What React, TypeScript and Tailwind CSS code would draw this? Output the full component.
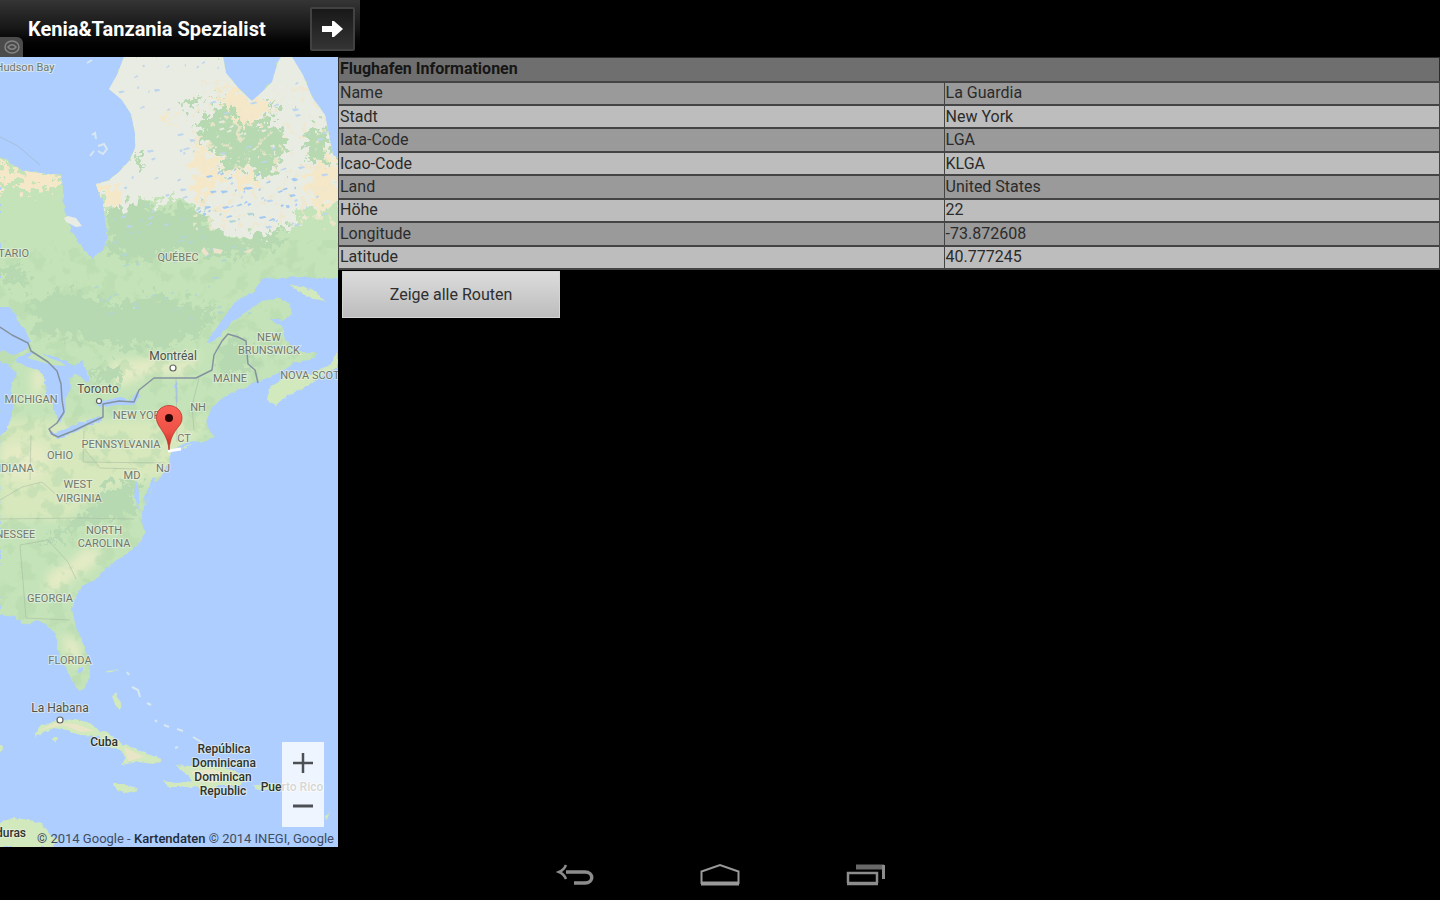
import React from 'react';

interface InfoRow {
  label: string;
  value: string;
}

interface MapLabel {
  text: string;
  x: number;
  y: number;
  kind: 'state' | 'city' | 'country';
}

const infoRows: InfoRow[] = [
  { label: 'Name', value: 'La Guardia' },
  { label: 'Stadt', value: 'New York' },
  { label: 'Iata-Code', value: 'LGA' },
  { label: 'Icao-Code', value: 'KLGA' },
  { label: 'Land', value: 'United States' },
  { label: 'Höhe', value: '22' },
  { label: 'Longitude', value: '-73.872608' },
  { label: 'Latitude', value: '40.777245' },
];

const mapLabels: MapLabel[] = [
  { text: 'Hudson Bay', x: 25, y: 71, kind: 'state' },
  { text: 'ONTARIO', x: 6, y: 257, kind: 'state' },
  { text: 'QUÉBEC', x: 178, y: 261, kind: 'state' },
  { text: 'NEW', x: 269, y: 341, kind: 'state' },
  { text: 'BRUNSWICK', x: 269, y: 354, kind: 'state' },
  { text: 'MAINE', x: 230, y: 382, kind: 'state' },
  { text: 'NOVA SCOTIA', x: 315, y: 379, kind: 'state' },
  { text: 'NH', x: 198, y: 411, kind: 'state' },
  { text: 'CT', x: 184, y: 442, kind: 'state' },
  { text: 'NEW YORK', x: 140, y: 419, kind: 'state' },
  { text: 'MICHIGAN', x: 31, y: 403, kind: 'state' },
  { text: 'PENNSYLVANIA', x: 121, y: 448, kind: 'state' },
  { text: 'OHIO', x: 60, y: 459, kind: 'state' },
  { text: 'INDIANA', x: 12, y: 472, kind: 'state' },
  { text: 'NJ', x: 163, y: 472, kind: 'state' },
  { text: 'MD', x: 132, y: 479, kind: 'state' },
  { text: 'WEST', x: 78, y: 488, kind: 'state' },
  { text: 'VIRGINIA', x: 79, y: 502, kind: 'state' },
  { text: 'TENNESSEE', x: 5, y: 538, kind: 'state' },
  { text: 'NORTH', x: 104, y: 534, kind: 'state' },
  { text: 'CAROLINA', x: 104, y: 547, kind: 'state' },
  { text: 'GEORGIA', x: 50, y: 602, kind: 'state' },
  { text: 'FLORIDA', x: 70, y: 664, kind: 'state' },
  { text: 'Montréal', x: 173, y: 360, kind: 'city' },
  { text: 'Toronto', x: 98, y: 393, kind: 'city' },
  { text: 'La Habana', x: 60, y: 712, kind: 'city' },
  { text: 'Cuba', x: 104, y: 746, kind: 'country' },
  { text: 'República', x: 224, y: 753, kind: 'country' },
  { text: 'Dominicana', x: 224, y: 767, kind: 'country' },
  { text: 'Dominican', x: 223, y: 781, kind: 'country' },
  { text: 'Republic', x: 223, y: 795, kind: 'country' },
  { text: 'Puerto Rico', x: 292, y: 791, kind: 'country' },
  { text: 'Honduras', x: 0, y: 837, kind: 'country' },
];

const labelStyles = {
  state: 'fill-[#70786e] text-[11px]',
  city: 'fill-[#4d524b] text-[12px]',
  country: 'fill-[#2f332e] text-[12px] font-medium',
};

const mainland =
  'M0 157 L8 160 15 166 24 171 40 173 61 175 63 190 64 207 70 228 77 239 83 250 92 258 102 251 108 239 105 218 103 204 99 193 96 184 107 181 118 173 130 160 135 148 135 133 131 114 122 100 109 89 117 75 124 57 H223 L226 73 240 90 252 101 262 92 272 82 278 62 281 57 H292 L303 75 312 97 325 115 329 135 333 155 338 158 V279 L300 277 262 279 253 292 235 302 222 320 206 343 214 342 232 322 243 314 262 301 280 298 290 304 292 314 284 320 268 318 282 326 285 340 300 352 317 352 314 359 296 362 284 370 270 377 258 381 240 389 222 398 211 409 206 422 210 432 214 436 205 442 190 441 172 449 168 463 160 478 155 483 149 498 143 508 141 520 145 533 136 547 120 558 104 570 95 580 82 586 75 598 72 610 76 627 83 643 85 650 90 662 90 676 84 689 79 691 72 680 65 667 57 650 56 634 47 625 38 620 26 625 15 617 0 615Z';

const islands = [
  'M338 350 331 364 310 374 288 373 269 389 267 400 276 405 287 396 307 386 324 374 338 367Z',
  'M290 285 301 286 316 292 325 301 314 299 300 293Z',
  'M34 737 39 727 55 721 75 719 90 723 98 730 112 735 122 744 136 749 148 754 163 760 153 764 139 762 121 765 126 757 120 750 109 746 98 736 80 735 67 730 53 728 40 735Z',
  'M176 765 190 766 205 764 225 768 240 773 249 779 240 785 219 785 207 792 195 787 170 787 162 781 178 783 192 781 187 774 180 770Z',
  'M113 784 127 784 138 790 126 793 117 790Z',
  'M254 785 280 784 284 789 256 790Z',
  'M0 822 14 818 30 820 42 823 50 835 58 840 52 847 H0Z',
  'M112 696 116 693 121 704 120 710 115 704Z',
  'M106 671 119 670 112 673Z',
  'M52 738 58 738 56 743Z',
  'M0 744 4 747 0 754Z',
  'M324 817 330 811 327 820Z',
  'M168 448 181 447 195 443 179 450Z',
];

const lakes = [
  'M0 307 9 307 15 313 18 321 25 329 30 341 26 350 13 355 0 350Z',
  'M0 362 8 364 17 373 11 385 12 397 12 415 7 430 0 436Z',
  'M15 360 31 352 49 355 64 360 74 366 82 361 88 373 90 382 83 380 76 373 69 379 71 388 65 400 66 412 60 422 56 416 53 406 46 398 45 380 38 370 27 367Z',
  'M49 430 53 433 66 429 80 423 98 416 103 420 86 427 70 434 59 438 51 436Z',
  'M98 404 106 400 120 398 131 400 136 393 140 396 134 405 118 405 106 407 99 406Z',
  'M175 382 178 381 178 403 176 402Z',
  'M136 480 139 493 139 505 141 514 137 505 134 493Z',
  'M153 477 156 482 151 491 145 505 144 497Z',
  'M79 667 83 667 82 673 79 672Z',
];

const forests = [
  'M198 125 210 112 222 108 218 90 228 100 245 121 270 121 285 132 282 153 278 172 262 176 242 165 230 175 214 150 200 142Z',
  'M184 104 199 97 197 107 187 109Z',
  'M306 143 318 120 328 135 331 158 318 166 306 160Z',
  'M268 99 278 107 277 115 268 108Z',
  'M132 165 139 152 142 160 135 166Z',
  'M109 211 136 203 170 210 195 205 212 230 245 240 290 225 270 252 225 258 180 252 140 263 107 252Z',
  'M30 302 72 292 115 305 160 294 200 308 222 304 204 330 164 349 116 345 72 338 36 334Z',
  'M220 353 233 336 248 338 257 362 245 374 220 373Z',
  'M35 548 66 525 95 505 105 488 137 480 137 510 120 519 84 526 60 540Z',
  'M0 263 30 272 26 286 0 282Z',
  'M88 369 118 365 122 380 96 384Z',
];

const lowlands = [
  'M0 445 36 443 50 450 42 478 25 482 0 476Z',
  'M50 571 72 561 83 548 105 550 92 568 73 578 60 592 43 590Z',
  'M61 635 77 640 82 652 76 668 66 652Z',
  'M31 368 46 372 45 388 33 398Z',
  'M108 362 145 359 182 362 202 350 188 376 150 374 118 388Z',
];

const sandAreas = [
  'M0 159 22 170 60 176 60 190 40 187 28 194 15 182 0 187Z',
  'M98 185 119 185 120 199 112 212 106 205Z',
  'M220 89 234 86 249 101 262 103 266 96 264 116 248 123 236 120 232 107 220 104Z',
  'M193 144 201 144 207 156 219 160 225 178 212 188 204 206 196 194Z',
  'M307 172 330 158 338 162 338 201 322 211 307 196Z',
  'M162 118 181 113 178 118 165 121Z',
  'M218 203 229 212 221 216Z',
  'M232 172 251 171 260 181 245 191 235 185Z',
];

const borders = [
  'M0 327 12 335 28 343 31 351 48 362 57 371 61 384 62 400 64 412 57 423 49 429 52 434 58 437 73 431 90 423 103 417 103 404 119 401 134 402 139 390 154 378 H196 L212 370 214 355 222 341 228 334 238 337 246 341 248 364 255 370 258 383',
];

const stateLines = [
  'M31 435 30 480',
  'M84 431 83 462 165 463',
  'M83 447 100 468 137 469',
  'M0 500 22 487 42 482 67 504',
  'M0 519 78 518 134 519',
  'M20 545 26 618 70 620',
  'M20 545 48 540 68 562 76 579',
  'M176 378 177 442',
  'M199 378 192 406 194 430',
  'M0 137 18 146 40 165',
];

// Small seeded generator so the lakes land in the same place on every render
function scatter(seed: number, count: number, box: number[]) {
  let n = seed;
  const next = () => {
    n = (n * 16807) % 2147483647;
    return n / 2147483647;
  };
  return Array.from({ length: count }, () => {
    const x = box[0] + next() * box[2];
    const y = box[1] + next() * box[3];
    const w = 1 + next() * 5;
    return `M${x.toFixed(1)} ${y.toFixed(1)} l${w.toFixed(1)} ${(-next() * 3).toFixed(1)} l${(w / 3).toFixed(1)} 1.5 l${(-w).toFixed(1)} 1.5z`;
  }).join(' ');
}

const northLakes = scatter(41, 80, [112, 60, 215, 170]);
const centralLakes = scatter(97, 40, [198, 170, 100, 55]);
const southLakes = scatter(733, 65, [90, 205, 160, 115]);
const greySpots = scatter(255, 55, [198, 120, 100, 105]);

function AirportMap() {
  return (
    <svg
      className="absolute inset-0 h-full w-full"
      viewBox="0 57 338 790"
      preserveAspectRatio="xMinYMin slice"
      role="img"
      aria-label="La Guardia"
    >
      <defs>
        <clipPath id="land">
          <path d={mainland} />
        </clipPath>
        <filter id="ragged" x="-10%" y="-10%" width="120%" height="120%">
          <feTurbulence type="fractalNoise" baseFrequency="0.13" numOctaves="3" seed="8" />
          <feDisplacementMap in="SourceGraphic" scale="36" xChannelSelector="R" yChannelSelector="G" />
        </filter>
        {/* Keeps the fill only where the noise is high, for woodland and sand patches */}
        <filter id="mottle" x="0" y="0" width="100%" height="100%">
          <feTurbulence type="fractalNoise" baseFrequency="0.06" numOctaves="4" seed="21" />
          <feColorMatrix values="0 0 0 0 0  0 0 0 0 0  0 0 0 0 0  9 0 0 0 -4.8" result="mask" />
          <feComposite in="SourceGraphic" in2="mask" operator="in" />
        </filter>
        <filter id="speckle" x="0" y="0" width="100%" height="100%">
          <feTurbulence type="fractalNoise" baseFrequency="0.14" numOctaves="3" seed="5" />
          <feColorMatrix values="0 0 0 0 0  0 0 0 0 0  0 0 0 0 0  0 10 0 0 -6.1" result="mask" />
          <feComposite in="SourceGraphic" in2="mask" operator="in" />
        </filter>
        <filter id="soft" x="-10%" y="-10%" width="120%" height="120%">
          <feGaussianBlur stdDeviation="5" />
        </filter>
        <filter id="coast">
          <feTurbulence type="fractalNoise" baseFrequency="0.2" numOctaves="2" seed="3" />
          <feDisplacementMap in="SourceGraphic" scale="4" xChannelSelector="R" yChannelSelector="G" />
        </filter>
        <linearGradient id="pin" x1="0" y1="0" x2="0" y2="1">
          <stop offset="0" stopColor="#fb6256" />
          <stop offset="0.6" stopColor="#ee5045" />
          <stop offset="1" stopColor="#c31f16" />
        </linearGradient>
      </defs>

      <rect y="57" width="338" height="790" fill="#adceff" />
      <g filter="url(#coast)">
        <path d={mainland} fill="#c4e3b8" />
        {islands.map((d) => (
          <path key={d} d={d} fill="#d2e8bd" />
        ))}
      </g>

      <g clipPath="url(#land)">
        <path
          d="M90 50 H345 V206 L318 209 296 211 294 228 268 235 242 236 220 232 210 219 194 203 174 198 155 201 134 202 114 211 100 205Z"
          fill="#e9ece2"
          filter="url(#ragged)"
        />
        <g fill="#d8e8bd" filter="url(#soft)">
          <path d="M0 420 H210 L160 480 110 490 65 520 0 520Z" />
          {lowlands.map((d) => (
            <path key={d} d={d} fill="#e4ebc5" />
          ))}
        </g>
        <rect y="240" width="338" height="450" fill="#b3d8ab" opacity="0.45" filter="url(#mottle)" />
        <g fill="#b7d9b2" filter="url(#ragged)">
          {forests.map((d) => (
            <path key={d} d={d} />
          ))}
        </g>
        <g fill="#f5e8c8" filter="url(#ragged)">
          {sandAreas.map((d) => (
            <path key={d} d={d} />
          ))}
        </g>
        <rect x="192" y="80" width="146" height="150" fill="#f0e6cb" opacity="0.8" filter="url(#speckle)" />
        <path d={greySpots} fill="#e9ece2" />
        <path d={northLakes} fill="#bdd5ee" />
        <path d={centralLakes} fill="#a3c9f3" />
        <path d={southLakes} fill="#b1d6d4" />
        <path d="M201 251 204 247 209 254 206 256Z M213 248 223 250 221 254 214 253Z M243 252 254 248 250 253Z" fill="#ede3cd" />
      </g>
      <path d="M64 218 68 216 76 218 82 226 76 227 66 222Z" fill="#e9ece2" />

      <g fill="#e9e6c8">
        <path d="M38 731 55 723 76 724 94 731 81 732 63 725 48 728Z" />
        <path d="M124 747 144 757 128 761Z" />
        <path d="M191 771 213 769 234 777 214 783 196 781Z" />
      </g>
      <g fill="#adceff" filter="url(#coast)">
        {lakes.map((d) => (
          <path key={d} d={d} />
        ))}
      </g>
      <path d="M27 358 36 351 50 358 61 362 66 366 52 365 38 361Z" fill="#c4e3b8" />
      <path
        d="M92 135 95 133 96 139 M98 146 104 144 107 149 103 154 98 151 M90 156 94 151 M87 63 92 60 M132 687 138 690 140 697 M147 703 151 705 M155 720 157 722 M164 725 169 727 M177 729 183 731 M193 737 203 743 M175 748 178 747 M127 672 129 675"
        fill="none"
        stroke="#d9e7ef"
        strokeWidth="2"
      />
      <path d="M168 451 181 449" stroke="#fff" strokeWidth="3" />

      <g fill="none" stroke="#9aaa98" strokeWidth="1" opacity="0.4">
        {stateLines.map((d) => (
          <path key={d} d={d} />
        ))}
      </g>
      <g fill="none" stroke="#8492a0" strokeWidth="1.5" strokeLinejoin="round">
        {borders.map((d) => (
          <path key={d} d={d} />
        ))}
      </g>

      <g fill="#fff" stroke="#5f665f" strokeWidth="1.2">
        <circle cx="173" cy="368" r="3" />
        <circle cx="99" cy="401" r="2.5" />
        <circle cx="60" cy="720" r="3" />
      </g>

      <g textAnchor="middle" stroke="#edf3e4" strokeOpacity="0.6" strokeWidth="2" paintOrder="stroke">
        {mapLabels.map((label) => (
          <text key={label.text} x={label.x} y={label.y} className={labelStyles[label.kind]}>
            {label.text}
          </text>
        ))}
      </g>

      <path
        d="M169 450 C168 438 163 432 159 426 C155 419 156 414 159 410 C164 404 174 404 179 410 C183 415 183 421 179 426 C174 432 170 438 169 450Z"
        fill="url(#pin)"
        stroke="#b8392f"
        strokeWidth="0.8"
      />
      <circle cx="169" cy="418" r="4" fill="#2b0503" />
    </svg>
  );
}

function AdBanner() {
  return (
    <div className="relative flex h-[57px] w-[360px] items-center justify-between bg-linear-to-b from-[#353535] via-[#171717] to-black pr-[5px] pl-7">
      <a href="#anzeige" className="text-xl font-bold text-white">
        Kenia&amp;Tanzania Spezialist
      </a>
      <button
        type="button"
        aria-label="Anzeige öffnen"
        className="grid h-11 w-[45px] place-items-center rounded-xs border-2 border-[#424242] bg-linear-to-b from-[#191919] to-[#343434]"
      >
        <svg width="22" height="18" viewBox="0 0 22 18" fill="#fff">
          <path d="M0 6 H10 V1 H12 L21 9 12 17 H10 V12 H0Z" />
        </svg>
      </button>
      <span className="absolute bottom-0 left-0 grid h-5 w-[23px] place-items-center rounded-tr-md bg-[#4b4b4b]">
        <svg width="16" height="14" viewBox="0 0 16 14" fill="none" stroke="#858585" strokeWidth="1.5">
          <ellipse cx="8" cy="7" rx="7" ry="6" />
          <path d="M4 7 C6 4 10 4 12 7 C10 10 6 10 4 7Z" />
        </svg>
      </span>
    </div>
  );
}

function AirportTable() {
  return (
    <table className="h-[213px] w-full border-collapse text-left text-base leading-5 text-[#2b2b2b]">
      <thead>
        <tr className="h-6 bg-[#6f6f6f]">
          <th colSpan={2} className="border border-[#2b2b2b] p-0 pl-px font-bold text-[#161616]">
            Flughafen Informationen
          </th>
        </tr>
      </thead>
      <tbody>
        {infoRows.map((row) => (
          <tr key={row.label} className="odd:bg-[#9a9a9a] even:bg-[#bdbdbd]">
            <th scope="row" className="w-[55%] border-2 border-x border-[#444] p-0 pl-px font-normal">
              {row.label}
            </th>
            <td className="border-2 border-x border-[#444] p-0 pl-px">{row.value}</td>
          </tr>
        ))}
      </tbody>
    </table>
  );
}

function NavigationBar() {
  return (
    <nav className="flex h-[53px] items-center justify-center gap-[105px] pt-1">
      <button type="button" aria-label="Zurück">
        <svg width="40" height="26" viewBox="0 0 40 26" fill="none" stroke="#8c8c8c">
          <path d="M11 9 H30 C39 9 39 20 30 20 H19" strokeWidth="3.5" />
          <path d="M11 2 Q9 7 4 9 Q9 11 11 16" strokeWidth="2.5" />
        </svg>
      </button>
      <button type="button" aria-label="Startseite">
        <svg width="40" height="26" viewBox="0 0 40 26" fill="none" stroke="#999">
          <path d="M1.5 21 V8.5 L20 2 38.5 8.5 V21" strokeWidth="2" />
          <path d="M1 20.5 H39" strokeWidth="4" />
        </svg>
      </button>
      <button type="button" aria-label="Letzte Apps">
        <svg width="40" height="26" viewBox="0 0 40 26" fill="none" stroke="#8c8c8c">
          <path d="M3 20 V10 H32 V20" strokeWidth="2.5" />
          <path d="M2 20.5 H33" strokeWidth="3.5" />
          <path d="M11 4 H39" strokeWidth="5" stroke="#686868" />
          <path d="M38.5 2 V16" strokeWidth="3" />
        </svg>
      </button>
    </nav>
  );
}

export default function App() {
  return (
    <div className="flex min-h-screen flex-col bg-black font-[Roboto,sans-serif]">
      <header>
        <AdBanner />
      </header>
      <main className="flex flex-1">
        <section className="relative w-[338px] shrink-0 overflow-hidden bg-[#adceff]">
          <AirportMap />
          <div className="absolute right-3.5 bottom-5 flex h-[85px] w-[42px] flex-col bg-white/80">
            <button type="button" aria-label="Vergrößern" className="grid flex-1 place-items-center">
              <svg width="20" height="20" viewBox="0 0 20 20" stroke="#4c4f54" strokeWidth="2.5">
                <path d="M0 10 H20 M10 0 V20" />
              </svg>
            </button>
            <button type="button" aria-label="Verkleinern" className="grid flex-1 place-items-center">
              <svg width="20" height="20" viewBox="0 0 20 20" stroke="#4c4f54" strokeWidth="3">
                <path d="M0 10 H20" />
              </svg>
            </button>
          </div>
          <p className="absolute right-1 bottom-0 text-[13px] leading-4 whitespace-nowrap text-[#3f4c61]">
            © 2014 Google - <span className="font-medium text-[#222c3a]">Kartendaten</span> © 2014 INEGI, Google
          </p>
        </section>
        <section className="min-w-0 flex-1">
          <AirportTable />
          <button
            type="button"
            className="mt-px ml-1 h-[47px] w-[218px] border border-[#d5d5d5] bg-linear-to-b from-[#dcdcdc] to-[#bdbdbd] text-base text-[#2f2f2f]"
          >
            Zeige alle Routen
          </button>
        </section>
      </main>
      <NavigationBar />
    </div>
  );
}
